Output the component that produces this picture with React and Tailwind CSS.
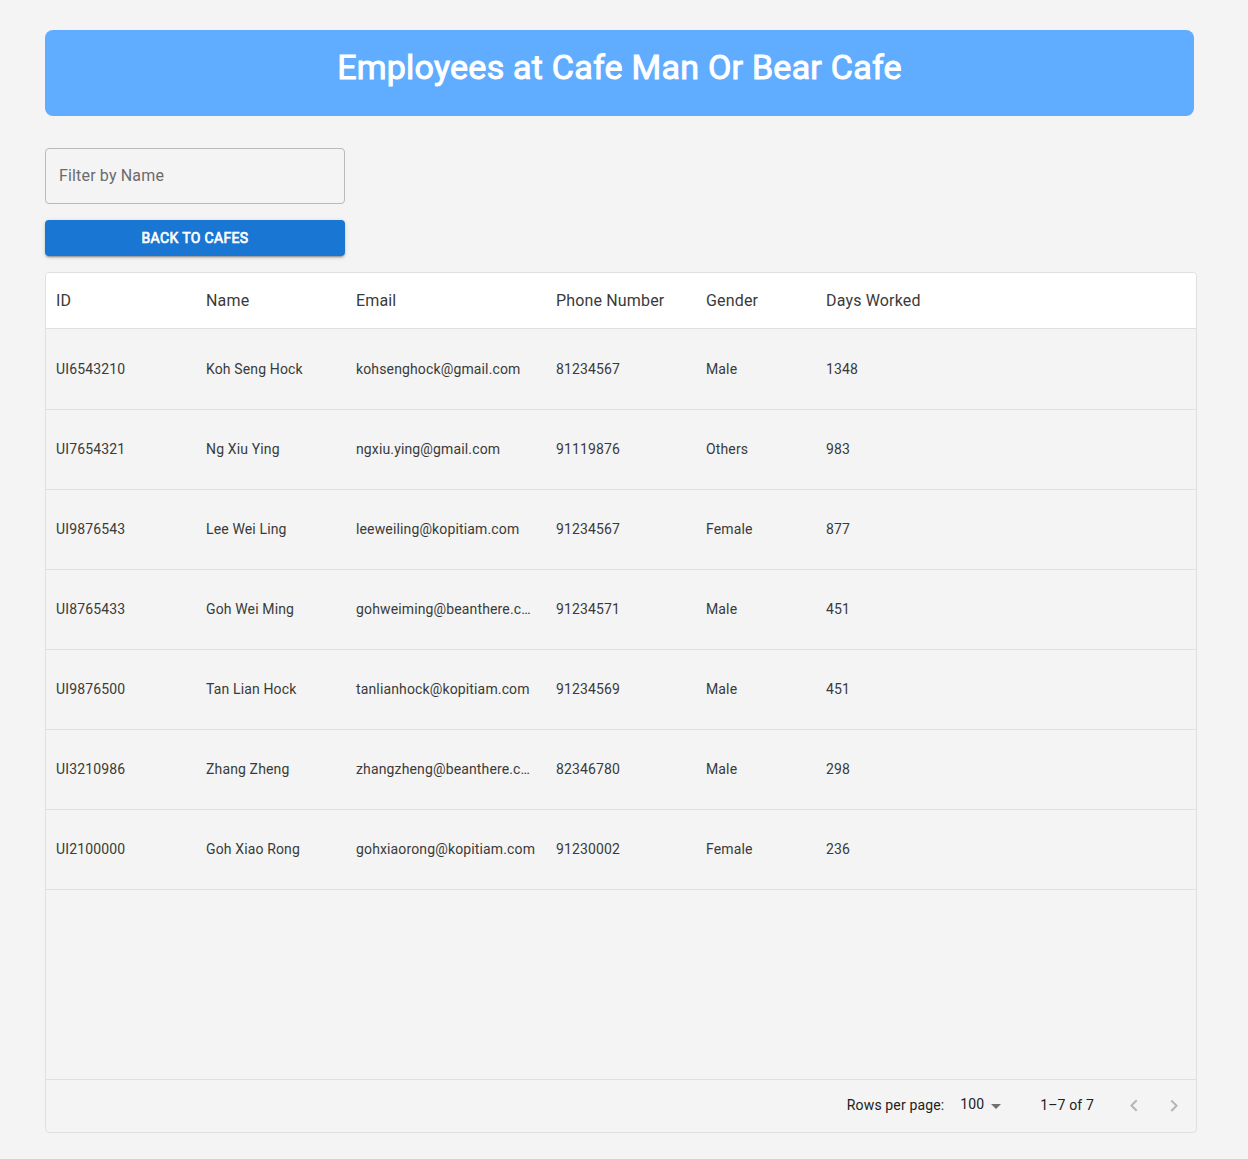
import { useState } from "react";

const columns = ["ID", "Name", "Email", "Phone Number", "Gender", "Days Worked"];

const employees = [
  ["UI6543210", "Koh Seng Hock", "kohsenghock@gmail.com", "81234567", "Male", "1348"],
  ["UI7654321", "Ng Xiu Ying", "ngxiu.ying@gmail.com", "91119876", "Others", "983"],
  ["UI9876543", "Lee Wei Ling", "leeweiling@kopitiam.com", "91234567", "Female", "877"],
  ["UI8765433", "Goh Wei Ming", "gohweiming@beanthere.com", "91234571", "Male", "451"],
  ["UI9876500", "Tan Lian Hock", "tanlianhock@kopitiam.com", "91234569", "Male", "451"],
  ["UI3210986", "Zhang Zheng", "zhangzheng@beanthere.com", "82346780", "Male", "298"],
  ["UI2100000", "Goh Xiao Rong", "gohxiaorong@kopitiam.com", "91230002", "Female", "236"],
];

function PageButton({ label, path }) {
  return (
    <button type="button" disabled aria-label={label} className="flex size-10 items-center justify-center text-[#b5b5b5]">
      <svg viewBox="0 0 24 24" className="size-6" fill="currentColor" aria-hidden="true">
        <path d={path} />
      </svg>
    </button>
  );
}

export default function App() {
  const [filter, setFilter] = useState("");
  const rows = employees.filter((row) => row[1].toLowerCase().includes(filter.toLowerCase()));

  return (
    <div className="flex min-h-screen flex-col bg-[#f4f4f4] pt-[30px] pr-[51px] pb-[26px] pl-[45px] font-['Roboto',sans-serif] text-[#3a3a3a]">
      <header className="mr-[3px] rounded-lg bg-[#60acff] px-5 pt-4 pb-7">
        <h1 className="text-center text-[34px] leading-[42px] font-normal tracking-[0.007em] text-white [-webkit-text-stroke:1px_white]">
          Employees at Cafe Man Or Bear Cafe
        </h1>
      </header>

      <div className="mt-8 flex w-[300px] flex-col gap-4">
        <input
          type="text"
          aria-label="Filter by Name"
          placeholder="Filter by Name"
          value={filter}
          onChange={(e) => setFilter(e.target.value)}
          className="h-14 rounded border border-[#bababa] bg-transparent px-[13px] pb-[2px] text-base tracking-[0.01em] outline-none placeholder:text-[#6b6b6b]"
        />
        <button
          type="button"
          className="h-9 rounded bg-[#1976d2] pb-px text-sm font-normal tracking-wide text-white uppercase shadow-[0_3px_1px_-2px_rgba(0,0,0,0.2),0_2px_2px_0_rgba(0,0,0,0.14),0_1px_5px_0_rgba(0,0,0,0.12)] [-webkit-text-stroke:0.05em_white]"
        >
          Back to cafes
        </button>
      </div>

      <section className="mt-4 flex flex-1 flex-col overflow-hidden rounded border border-[#e0e0e0]">
        <div className="flex-1">
          <table className="w-full table-fixed border-separate border-spacing-0 text-left">
            <colgroup>
              <col className="w-[150px]" />
              <col className="w-[150px]" />
              <col className="w-[200px]" />
              <col className="w-[150px]" />
              <col className="w-[120px]" />
              <col />
            </colgroup>
            <thead>
              <tr className="h-14 bg-white">
                {columns.map((name) => (
                  <th key={name} scope="col" className="border-b border-[#e0e0e0] px-[10px] text-base font-normal tracking-[0.01em]">
                    {name}
                  </th>
                ))}
              </tr>
            </thead>
            <tbody>
              {rows.map((row) => (
                <tr key={row[0]} className="h-20 first:h-[81px]">
                  {row.map((value, i) => (
                    <td key={columns[i]} className="truncate border-b border-[#e0e0e0] px-[10px] pb-px text-sm tracking-[0.01em]">
                      {value}
                    </td>
                  ))}
                </tr>
              ))}
            </tbody>
          </table>
        </div>

        <footer className="flex h-[53px] items-center justify-end border-t border-[#e0e0e0] pr-[2px] text-sm tracking-[0.01em] text-[#212121]">
          <label htmlFor="page-size" className="pb-[2px]">Rows per page:</label>
          <div className="relative mr-8 ml-4">
            <select id="page-size" defaultValue="100" className="w-12 appearance-none bg-transparent pb-1 text-sm outline-none">
              <option>25</option>
              <option>50</option>
              <option>100</option>
            </select>
            <svg viewBox="0 0 24 24" className="pointer-events-none absolute top-0 right-0 size-6 text-[#707070]" fill="currentColor" aria-hidden="true">
              <path d="M7 10l5 5 5-5z" />
            </svg>
          </div>
          <span className="pb-[2px]">1–7 of 7</span>
          <div className="ml-5 flex">
            <PageButton label="Previous page" path="M15.41 16.09l-4.58-4.59 4.58-4.59L14 5.5l-6 6 6 6z" />
            <PageButton label="Next page" path="M8.59 16.34l4.58-4.59-4.58-4.59L10 5.75l6 6-6 6z" />
          </div>
        </footer>
      </section>
    </div>
  );
}
